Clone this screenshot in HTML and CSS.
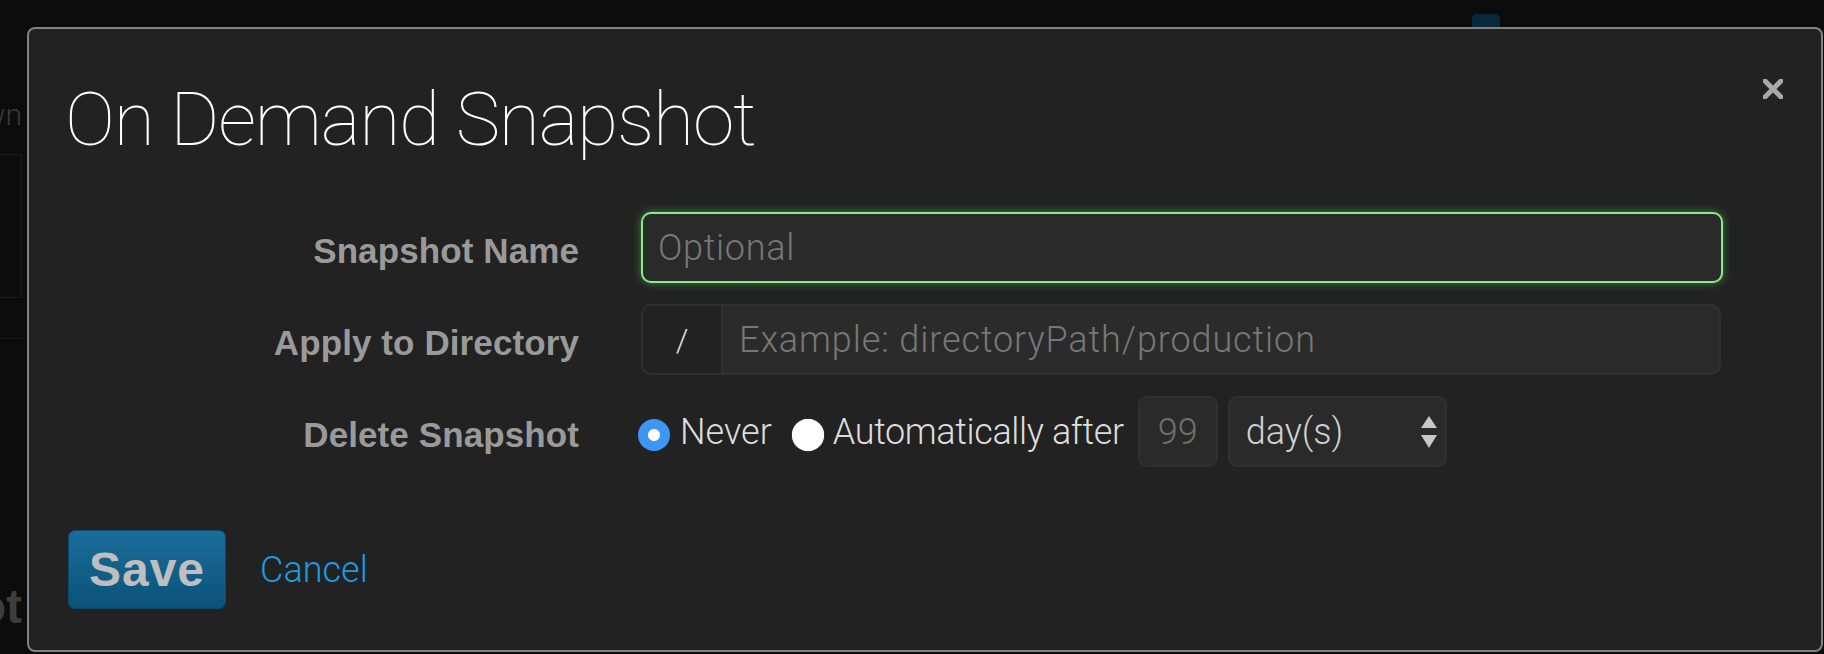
FILE: index.html
```html
<!DOCTYPE html>
<html lang="en">
<head>
<meta charset="utf-8">
<title>On Demand Snapshot</title>
<link rel="stylesheet" href="styles.css">
</head>
<body>
<div class="page">
  <div class="topbar"><span class="bg-icon"></span></div>
  <div class="side">
    <div class="side-title">Breakdown</div>
    <div class="side-box"></div>
    <div class="side-rule"></div>
    <div class="side-heading">Snapshot</div>
  </div>
</div>
<div class="overlay">
  <div class="modal">
    <div class="modal-header">
      <h1 class="title">On Demand Snapshot</h1>
      <button class="close" type="button" aria-label="Close">
        <svg width="20" height="20" viewBox="0 0 20 20"><path d="M2 2 L18 18 M18 2 L2 18" stroke="#a9a9a9" stroke-width="5" stroke-linecap="square" fill="none"/></svg>
      </button>
    </div>
    <form class="form">
      <label class="label">Snapshot Name</label>
      <div class="control">
        <input class="text-input focused" type="text" placeholder="Optional">
      </div>

      <label class="label">Apply to Directory</label>
      <div class="control input-group">
        <span class="addon">/</span>
        <input class="group-input" type="text" placeholder="Example: directoryPath/production">
      </div>

      <label class="label">Delete Snapshot</label>
      <div class="control radio-row">
        <span class="radio checked"></span>
        <span class="radio-text">Never</span>
        <span class="radio unchecked"></span>
        <span class="radio-text auto">Automatically after</span>
        <span class="num-box">99</span>
        <span class="select">
          <span class="select-text">day(s)</span>
          <svg class="select-arrows" width="16" height="32" viewBox="0 0 16 32"><path d="M8 0 L16 12 L0 12 Z M0 19 L16 19 L8 32 Z" fill="#c8c8c8"/></svg>
        </span>
      </div>
    </form>
    <div class="footer">
      <button class="btn-save" type="button">Save</button>
      <a class="cancel" href="#">Cancel</a>
    </div>
  </div>
</div>
</body>
</html>
```

FILE: styles.css
```css
html, body {
  margin: 0;
  padding: 0;
}
body {
  background: #0c0c0c;
  font-family: Roboto, "Liberation Sans", sans-serif;
  overflow: hidden;
  width: 1824px;
  height: 654px;
}

/* background page remnants */
.page {
  display: flex;
  flex-direction: column;
}
.topbar {
  height: 27px;
  display: flex;
  align-items: flex-end;
}
.bg-icon {
  display: block;
  width: 28px;
  height: 13px;
  margin-left: 1472px;
  background: #06293b;
  border-radius: 5px 5px 0 0;
}
.side {
  width: 22px;
  overflow: hidden;
  display: flex;
  flex-direction: column;
  align-items: flex-end;
}
.side-title {
  margin-top: 70px;
  font-size: 30px;
  font-weight: 300;
  color: #3a3a3a;
  white-space: nowrap;
  direction: rtl;
}
.side-box {
  margin-top: 22px;
  width: 22px;
  height: 144px;
  box-sizing: border-box;
  border-top: 1px solid #1c1c1c;
  border-bottom: 1px solid #1c1c1c;
  border-right: 2px solid #151515;
}
.side-rule {
  margin-top: 40px;
  width: 22px;
  height: 1px;
  background: #191919;
}
.side-heading {
  margin-top: 240px;
  font-family: "Liberation Sans", Arial, sans-serif;
  font-weight: 700;
  font-size: 48px;
  color: #3d3d3d;
  white-space: nowrap;
  direction: rtl;
}

/* modal */
.overlay {
  position: fixed;
  inset: 0;
  padding: 27px 0 0 27px;
}
.modal {
  box-sizing: border-box;
  width: 1796px;
  height: 625px;
  background: #222222;
  border: 2px solid #828282;
  border-radius: 8px;
  padding: 50px 38px 0 39px;
}
.modal-header {
  display: flex;
  justify-content: space-between;
  align-items: flex-start;
}
.title {
  margin: 3px 0 0 -3px;
  font-family: Roboto, "Liberation Sans", sans-serif;
  font-weight: 100;
  font-size: 75px;
  line-height: 75px;
  letter-spacing: -1.2px;
  color: #ffffff;
}
.close {
  border: 0;
  background: none;
  padding: 0;
  width: 20px;
  height: 20px;
  display: block;
  cursor: pointer;
}
.close svg {
  display: block;
}

.form {
  margin-top: 55px;
  display: grid;
  grid-template-columns: 511px 1082px;
  grid-auto-rows: 71px;
  column-gap: 62px;
  row-gap: 21px;
}
.label {
  display: flex;
  align-items: center;
  justify-content: flex-end;
  padding-top: 7px;
  font-family: "Liberation Sans", Arial, sans-serif;
  font-weight: 700;
  font-size: 35px;
  letter-spacing: 0.1px;
  color: #9a9a9a;
}
.control {
  display: flex;
  align-items: center;
}
.text-input {
  box-sizing: border-box;
  width: 100%;
  height: 71px;
  background: #2a2a2a;
  border: 2px solid #86ee86;
  border-radius: 10px;
  box-shadow: 0 0 8px rgba(110, 240, 110, 0.45);
  padding: 0 15px;
  font-family: Roboto, "Liberation Sans", sans-serif;
  font-weight: 300;
  font-size: 36px;
  letter-spacing: 0.7px;
  color: #dddddd;
  outline: none;
}
.text-input::placeholder,
.group-input::placeholder {
  color: #777777;
}
.input-group {
  box-sizing: border-box;
  width: 1080px;
  height: 71px;
  border: 2px solid #303030;
  border-radius: 10px;
  overflow: hidden;
  background: #2b2b2b;
}
.addon {
  display: flex;
  align-items: center;
  justify-content: center;
  width: 78px;
  height: 100%;
  background: #222222;
  border-right: 2px solid #303030;
  font-size: 32px;
  font-weight: 300;
  color: #dddddd;
}
.group-input {
  flex: 1;
  height: 100%;
  border: 0;
  background: transparent;
  padding: 0 16px;
  font-family: Roboto, "Liberation Sans", sans-serif;
  font-weight: 300;
  font-size: 36px;
  letter-spacing: 0.9px;
  color: #dddddd;
  outline: none;
}

.radio-row {
  font-weight: 300;
  font-size: 36px;
  color: #dddddd;
}
.radio {
  display: block;
  width: 32px;
  height: 32px;
  border-radius: 50%;
  box-sizing: border-box;
  margin-top: 6px;
}
.radio.checked {
  margin-left: -3px;
  background: radial-gradient(circle, #ffffff 0 5.5px, #3d96f4 6.5px);
}
.radio.unchecked {
  margin-left: 20px;
  background: #ffffff;
  box-shadow: 0 0 1px #ffffff;
}
.radio-text {
  margin-left: 10px;
  white-space: nowrap;
}
.radio-text.auto {
  margin-left: 9px;
  letter-spacing: -0.37px;
}
.num-box {
  box-sizing: border-box;
  margin-left: 14px;
  width: 80px;
  height: 71px;
  display: flex;
  align-items: center;
  justify-content: center;
  background: #2a2a2a;
  border: 2px solid #303030;
  border-radius: 9px;
  color: #6f6f6f;
}
.select {
  box-sizing: border-box;
  margin-left: 10px;
  width: 219px;
  height: 71px;
  display: flex;
  align-items: center;
  justify-content: space-between;
  background: #2a2a2a;
  border: 2px solid #303030;
  border-radius: 9px;
  padding: 0 8px 0 16px;
  color: #d0d0d0;
}
.select-arrows {
  display: block;
}

.footer {
  margin-top: 63px;
  display: flex;
  align-items: center;
}
.btn-save {
  box-sizing: border-box;
  width: 158px;
  height: 79px;
  border: 1px solid #0b4a6c;
  border-radius: 7px;
  background: linear-gradient(#1b6e9b, #0a5278);
  font-family: "Liberation Sans", Arial, sans-serif;
  font-weight: 700;
  font-size: 48px;
  letter-spacing: 1px;
  color: #bfbfbf;
  padding: 0;
  cursor: pointer;
}
.cancel {
  margin-left: 34px;
  font-weight: 300;
  font-size: 36px;
  color: #1c9be0;
  text-decoration: none;
}
```
